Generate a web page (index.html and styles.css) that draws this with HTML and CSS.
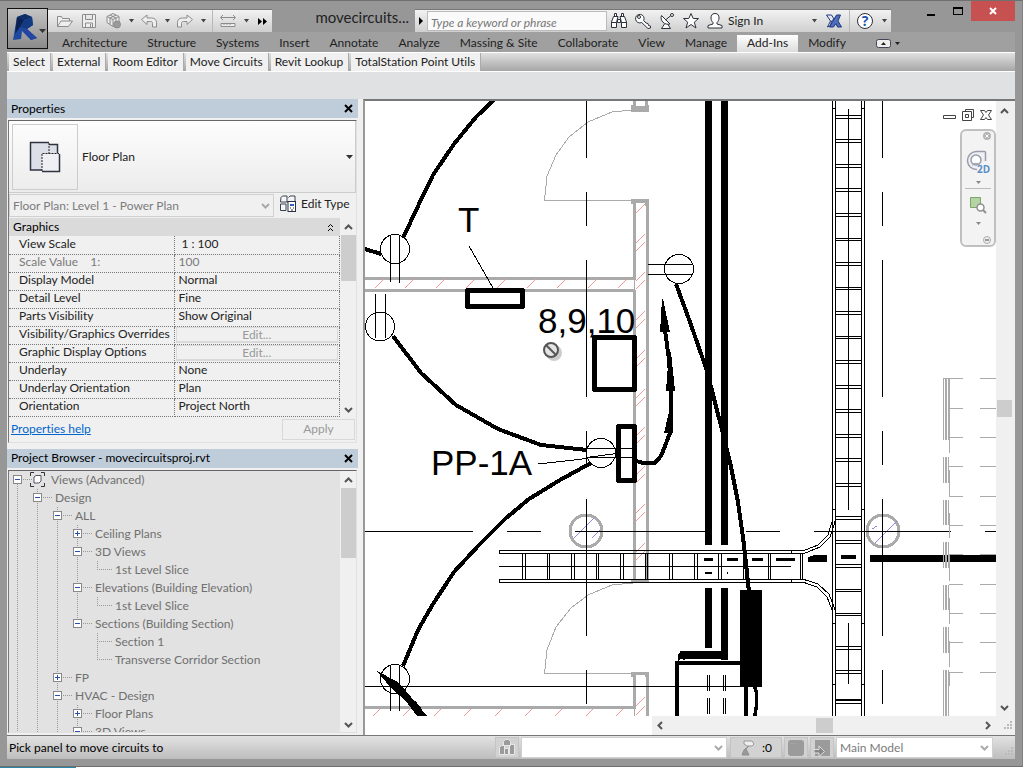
FILE: index.html
```html
<!DOCTYPE html>
<html lang="en">
<head>
    <meta charset="UTF-8">
    <meta name="viewport" content="width=device-width, initial-scale=1.0">
    <title>movecircuitsproj.rvt</title>
    <link rel="stylesheet" href="styles.css">
</head>
<body>
<div class="window">

    <header class="header">
        <button class="app-button" aria-label="Application menu">
            <svg width="38" height="34" viewBox="0 0 38 34">
                <path d="M8 5L16 2L23 5L24 13L18 17L28 26L22 28L13 19L12 27L4 28Z" fill="#1d4aa0"/>
                <path d="M8 5L16 2L23 5L15 8Z" fill="#0e2c66"/>
                <path d="M15 8L23 5L24 13L18 17L11 15Z" fill="#143a82"/>
                <path d="M8 5L15 8L11 15L6 22Z" fill="#0b2250"/>
                <path d="M11 15L18 17L28 26L22 28Z" fill="#2344a0"/>
                <path d="M30 17h7l-3.500 4z" fill="#333"/>
            </svg>
        </button>

        <div class="header-rows">
            <div class="title-row">
                <div class="quick">
                    <button class="tool" aria-label="Open">
                        <svg width="18" height="16" viewBox="0 0 18 16"><path d="M1.500 13.500V3.500h4l1 2h7v2.500M1.500 13.500L5 8h11.500l-4 5.500z"/></svg>
                    </button>
                    <button class="tool" aria-label="Save">
                        <svg width="16" height="16" viewBox="0 0 16 16"><path d="M1.500 1.500h13v13h-13zM4.500 1.500v5h7v-5M4.500 14.500v-4.500h7v4.500M9.500 11v3"/></svg>
                    </button>
                    <button class="tool" aria-label="Synchronize">
                        <svg width="18" height="16" viewBox="0 0 18 16"><path d="M9 .5l6 3v6l-6 4-6-4v-6zM3 3.500l6 3 6-3M9 6.500v7M6 2l6 3v6.500M12 2L6 5v6.500"/><circle cx="13" cy="11.500" r="3.500" fill="#9a9a9a"/></svg>
                    </button>
                    <button class="drop" aria-label="Synchronize options"><svg width="7" height="4" viewBox="0 0 7 4"><path d="M1 0h5L3.500 3.500z"/></svg></button>
                    <button class="tool" aria-label="Undo">
                        <svg width="18" height="14" viewBox="0 0 18 14"><path d="M1.500 5.500l5.500-4.500v3h4.500c3.500 0 5 2 5 4.500v4.500h-4v-3.500c0-1.500-.5-2-2-2H7v3z"/></svg>
                    </button>
                    <button class="drop" aria-label="Undo list"><svg width="7" height="4" viewBox="0 0 7 4"><path d="M1 0h5L3.500 3.500z"/></svg></button>
                    <button class="tool" aria-label="Redo">
                        <svg width="18" height="14" viewBox="0 0 18 14"><path d="M16.500 5.500L11 1v3H6.500c-3.500 0-5 2-5 4.500V13h4V9.500c0-1.500.5-2 2-2H11v3z"/></svg>
                    </button>
                    <button class="drop" aria-label="Redo list"><svg width="7" height="4" viewBox="0 0 7 4"><path d="M1 0h5L3.500 3.500z"/></svg></button>
                    <span class="divider"></span>
                    <button class="tool" aria-label="Measure">
                        <svg width="18" height="14" viewBox="0 0 18 14"><path d="M2 3.500h14M4 1L1.500 3.500 4 6M14 1l2.500 2.500L14 6"/><path d="M2 9.500h14v3H2zM5 9v2M8 9v2M11 9v2" /></svg>
                    </button>
                    <button class="drop" aria-label="Measure options"><svg width="7" height="4" viewBox="0 0 7 4"><path d="M1 0h5L3.500 3.500z"/></svg></button>
                    <button class="more" aria-label="More tools"><svg width="9" height="7" viewBox="0 0 9 7"><path d="M0 0l4 3.500L0 7zM5 0l4 3.500L5 7z"/></svg></button>
                </div>

                <div class="title">movecircuits...</div>

                <div class="search">
                    <button class="search-toggle" aria-label="Collapse search"><svg width="4" height="8" viewBox="0 0 4 8"><path d="M0 0l4 4-4 4z"/></svg></button>
                    <input type="text" placeholder="Type a keyword or phrase" aria-label="Search">
                    <button class="info" aria-label="Find">
                        <svg width="18" height="18" viewBox="0 0 18 18"><path d="M4.500 1.500h2v3h-2zM11.500 1.500h2v3h-2zM3.500 4.500L1.500 10v5.500h5v-5l1.500-6zM14.500 4.500l2 5.500v5.500h-5v-5L10 4.500zM1.500 10.500h5M11.500 10.500h5M7.500 7.500h3v3h-3z"/></svg>
                    </button>
                    <button class="info" aria-label="Subscription">
                        <svg width="18" height="18" viewBox="0 0 18 18"><path d="M9.700 8.500a4.300 4.300 0 1 0-2 2L14 16.500l2.500-.5v-2l-2-.5-.5-2-2-.5z"/><circle cx="5" cy="5" r="1.500"/></svg>
                    </button>
                    <button class="info" aria-label="Communication Center">
                        <svg width="18" height="18" viewBox="0 0 18 18"><path d="M3.500 3.500c-2 5 3 10 8.500 8.500zM7.500 8l6-5M6.500 12l-3 4.500h9L10 12.500"/><circle cx="14" cy="3" r="1.500"/></svg>
                    </button>
                    <button class="info" aria-label="Favorites">
                        <svg width="18" height="18" viewBox="0 0 18 18"><path d="M9 1.500l2.200 5h5.300l-4.200 3.700 1.700 5.800-5-3.500L4 16l1.700-5.800L1.500 6.500h5.300z"/></svg>
                    </button>
                    <button class="sign-in">
                        <svg width="18" height="18" viewBox="0 0 18 18"><path d="M9 1.500c3 0 4 2 4 4.500 0 2-1 3.500-2 4.500v1.500l5 1.500v2.500H2V13.500L7 12v-1.500C6 9.500 5 8 5 6c0-2.500 1-4.500 4-4.500z"/></svg>
                        <span>Sign In</span>
                        <svg class="arrow" width="7" height="4" viewBox="0 0 7 4"><path d="M1 0h5L3.500 3.500z"/></svg>
                    </button>
                    <button class="info" aria-label="Exchange Apps">
                        <svg width="18" height="16" viewBox="0 0 18 16"><path d="M1.500 2h5l2.500 4-2.500 2-1 4.500-3 1.500 3-6z" fill="#e4e8f2" stroke="#20397c"/><path d="M15.500 2h-4l-7 12h4l2.500-3.500 1.500 3.500h4l-3.500-6z" fill="#4c70be" stroke="#20397c"/></svg>
                    </button>
                    <span class="divider"></span>
                    <button class="info" aria-label="Help">
                        <svg class="help" width="18" height="18" viewBox="0 0 18 18"><circle cx="9" cy="9" r="7.500"/><text x="9" y="14" text-anchor="middle">?</text></svg>
                    </button>
                    <button class="drop" aria-label="Help options"><svg width="7" height="4" viewBox="0 0 7 4"><path d="M1 0h5L3.500 3.500z"/></svg></button>
                </div>

                <div class="caption">
                    <button aria-label="Minimize"><svg width="10" height="10" viewBox="0 0 10 10"><path d="M1 8h8v2H1z"/></svg></button>
                    <button aria-label="Maximize"><svg width="10" height="10" viewBox="0 0 10 10"><path d="M0 1h10v8H0zM1 3v5h8V3z" fill-rule="evenodd"/></svg></button>
                    <button class="close" aria-label="Close"><svg width="8" height="8" viewBox="0 0 8 8"><path d="M1 1l6 6M7 1L1 7"/></svg></button>
                </div>
            </div>

            <nav class="tabs">
                <a href="#">Architecture</a>
                <a href="#">Structure</a>
                <a href="#">Systems</a>
                <a href="#">Insert</a>
                <a href="#">Annotate</a>
                <a href="#">Analyze</a>
                <a href="#">Massing &amp; Site</a>
                <a href="#">Collaborate</a>
                <a href="#">View</a>
                <a href="#">Manage</a>
                <a href="#" class="active">Add-Ins</a>
                <a href="#">Modify</a>
                <button class="ribbon-toggle" aria-label="Ribbon display">
                    <svg width="24" height="9" viewBox="0 0 24 9"><rect x=".5" y=".5" width="14" height="8" rx="2" fill="#eee" stroke="#445"/><path d="M5 6h5L7.500 3zM19 3h5l-2.500 3z" fill="#222"/></svg>
                </button>
            </nav>
        </div>
    </header>

    <div class="ribbon">
        <button>Select</button>
        <button>External</button>
        <button>Room Editor</button>
        <button>Move Circuits</button>
        <button>Revit Lookup</button>
        <button>TotalStation Point Utils</button>
    </div>
    <div class="options-bar"></div>

    <main class="main">
        <div class="dock">
            <section class="panel">
                <h2>Properties
                    <button aria-label="Close Properties"><svg width="9" height="9" viewBox="0 0 9 9"><path d="M1 1l7 7M8 1L1 8"/></svg></button>
                </h2>
                <div class="panel-body">
                    <button class="type-selector">
                        <span class="preview">
                            <svg width="32" height="32" viewBox="0 0 32 32">
                                <path d="M1.500 1.500H20v2h9V13h2v18H13v-2H1.500z" fill="#dcdfe8"/>
                                <path d="M13 13h18v18H13z" fill="#eef0f4"/>
                                <path d="M20 1.500H1.500V29H13M20 3.500h8.500V12" fill="none" stroke="#2f3440" stroke-width="1.500"/>
                                <path d="M30.500 13v17.500H13" fill="none" stroke="#2f3440" stroke-width="1.500"/>
                                <path d="M20 2v10.500M13 30V12.500h17" fill="none" stroke="#222" stroke-dasharray="2 1"/>
                            </svg>
                        </span>
                        <span class="type-name">Floor Plan</span>
                        <svg width="7" height="4" viewBox="0 0 7 4"><path d="M0 0h7L3.500 4z" fill="#333"/></svg>
                    </button>

                    <div class="instance">
                        <div class="combo">
                            <select disabled aria-label="Instance"><option>Floor Plan: Level 1 - Power Plan</option></select>
                            <svg width="9" height="6" viewBox="0 0 9 6"><path d="M1 1l3.500 3.500L8 1"/></svg>
                        </div>
                        <button class="edit-type">
                            <svg width="18" height="18" viewBox="0 0 18 18"><path d="M2 2.500L3.500 1H8v6H1.500zM9.500 2.500L11 1h5v5M1.500 9H7v6.500H1.500zM8 7h2" fill="#f6f7fa" stroke="#3c4250"/><rect x="9" y="6.500" width="7.500" height="10" fill="#fff" stroke="#2b3142"/><path d="M11 9h4v2h-4z" fill="#2f62b5"/><path d="M11 13h1M14 13h1M12 15h2" stroke="#333"/></svg>
                            <span>Edit Type</span>
                        </button>
                    </div>

                    <div class="grid-wrap">
                        <table class="props">
                            <thead>
                                <tr><th colspan="2"><span>Graphics<svg width="7" height="9" viewBox="0 0 7 9"><path d="M1 4l2.500-2.500L6 4M1 8l2.500-2.500L6 8"/></svg></span></th></tr>
                            </thead>
                            <tbody>
                                <tr><td>View Scale</td><td class="scale">1 : 100</td></tr>
                                <tr class="off"><td>Scale Value &nbsp;&nbsp; 1:</td><td>100</td></tr>
                                <tr><td>Display Model</td><td>Normal</td></tr>
                                <tr><td>Detail Level</td><td>Fine</td></tr>
                                <tr><td>Parts Visibility</td><td>Show Original</td></tr>
                                <tr><td>Visibility/Graphics Overrides</td><td class="edit"><button disabled>Edit...</button></td></tr>
                                <tr><td>Graphic Display Options</td><td class="edit"><button disabled>Edit...</button></td></tr>
                                <tr><td>Underlay</td><td>None</td></tr>
                                <tr><td>Underlay Orientation</td><td>Plan</td></tr>
                                <tr><td>Orientation</td><td>Project North</td></tr>
                            </tbody>
                        </table>
                        <div class="vscroll">
                            <svg width="9" height="6" viewBox="0 0 9 6"><path d="M1 5l3.500-3.500L8 5"/></svg>
                            <span class="thumb props-thumb"></span>
                            <svg width="9" height="6" viewBox="0 0 9 6"><path d="M1 1l3.500 3.500L8 1"/></svg>
                        </div>
                    </div>

                    <div class="panel-foot">
                        <a href="#">Properties help</a>
                        <button disabled>Apply</button>
                    </div>
                </div>
            </section>

            <section class="panel browser">
                <h2>Project Browser - movecircuitsproj.rvt
                    <button aria-label="Close Project Browser"><svg width="9" height="9" viewBox="0 0 9 9"><path d="M1 1l7 7M8 1L1 8"/></svg></button>
                </h2>
                <div class="panel-body tree-wrap">
                    <ul class="tree">
                        <li>
                            <div class="node"><button class="toggle" aria-label="Collapse"></button>
                                <svg width="15" height="15" viewBox="0 0 15 15"><path d="M4 .5H.5V4M11 .5h3.500V4M4 14.500H.5V11M11 14.500h3.500V11" fill="none" stroke="#333"/><path d="M4 5l2-1.500h5V9l-2 2H4z" fill="#fff" stroke="#556"/></svg>
                                Views (Advanced)</div>
                            <ul>
                                <li>
                                    <div class="node"><button class="toggle" aria-label="Collapse"></button>Design</div>
                                    <ul>
                                        <li>
                                            <div class="node"><button class="toggle" aria-label="Collapse"></button>ALL</div>
                                            <ul>
                                                <li><div class="node"><button class="toggle plus" aria-label="Expand"></button>Ceiling Plans</div></li>
                                                <li>
                                                    <div class="node"><button class="toggle" aria-label="Collapse"></button>3D Views</div>
                                                    <ul><li class="last"><div class="leaf">1st Level Slice</div></li></ul>
                                                </li>
                                                <li>
                                                    <div class="node"><button class="toggle" aria-label="Collapse"></button>Elevations (Building Elevation)</div>
                                                    <ul><li class="last"><div class="leaf">1st Level Slice</div></li></ul>
                                                </li>
                                                <li class="last">
                                                    <div class="node"><button class="toggle" aria-label="Collapse"></button>Sections (Building Section)</div>
                                                    <ul>
                                                        <li><div class="leaf">Section 1</div></li>
                                                        <li class="last"><div class="leaf">Transverse Corridor Section</div></li>
                                                    </ul>
                                                </li>
                                            </ul>
                                        </li>
                                        <li><div class="node"><button class="toggle plus" aria-label="Expand"></button>FP</div></li>
                                        <li>
                                            <div class="node"><button class="toggle" aria-label="Collapse"></button>HVAC - Design</div>
                                            <ul>
                                                <li><div class="node"><button class="toggle plus" aria-label="Expand"></button>Floor Plans</div></li>
                                                <li><div class="node"><button class="toggle" aria-label="Collapse"></button>3D Views</div></li>
                                            </ul>
                                        </li>
                                    </ul>
                                </li>
                            </ul>
                        </li>
                    </ul>
                    <div class="vscroll">
                        <svg width="9" height="6" viewBox="0 0 9 6"><path d="M1 5l3.500-3.500L8 5"/></svg>
                        <span class="thumb tree-thumb"></span>
                        <svg width="9" height="6" viewBox="0 0 9 6"><path d="M1 1l3.500 3.500L8 1"/></svg>
                    </div>
                </div>
            </section>
        </div>

        <section class="view">
            <div class="view-row">
                <div class="canvas">
                    <svg class="drawing" viewBox="365 101 631 615" preserveAspectRatio="xMinYMin slice">
                        <!-- walls and doors -->
                        <g class="wall">
                            <path d="M365 278.500H636M365 290.500H634M634.500 204V279M634.500 290V580M647 204V580M365 707.500H636M634.500 676V708M647 676V716M634.500 101V106M646.500 101V106"/>
                        </g>
                        <path class="jamb" d="M631 105h18v7h-18zM631 199h18v5h-3v2h-12v-2h-3zM631 579h18v4h-18zM631 672h18v5h-18z"/>
                        <path fill="#fff" d="M636 101h9v5h-9zM636 203h9v3h-9zM636 675h9v3h-9z"/>
                        <path class="thin-gray" d="M544.500 200.500L547 176L556 155L569 137L588 122L612 112L633 110M544 200.500H634M544.500 673.500L547 650L556 627L571 608L588 595L612 585L633 583M544 673.500H634M634.500 279V291M634.500 708V716"/>
                        <path class="hatch" d="M375 288l9-9M405 288l9-9M436 288l9-9M466 288l9-9M497 288l9-9M527 288l9-9M557 288l9-9M588 288l9-9M618 288l9-9
                            M373 716l7-7M403 716l7-7M434 716l7-7M464 716l7-7M495 716l7-7M525 716l7-7M555 716l7-7M586 716l7-7M616 716l7-7
                            M636 213l9-9M636 243l9-9M636 251l9-9M636 281l9-9M636 289l9-9M636 320l9-9M636 328l9-9M636 359l9-9M636 367l9-9M636 398l9-9M636 406l9-9M636 436l9-9M636 444l9-9M636 475l9-9M636 483l9-9M636 513l9-9M636 521l9-9M636 552l9-9M636 560l9-9M636 706l9-9M636 715l9-9"/>

                        <!-- columns -->
                        <g class="column"><circle cx="586" cy="531" r="16"/><circle cx="883" cy="531" r="16"/></g>
                        <path class="blue" d="M574 538l20-20M592 538l8-8M875 543l22-22M872 529l5-3"/>

                        <!-- grid lines -->
                        <path class="gridline" d="M586.500 21V716M882.500 21V716M336 531.500H996"/>
                        <path class="thin" d="M365 686.500H740"/>

                        <!-- horizontal tray -->
                        <path class="thin" d="M804 550.500H499.500V553.500H804M804 579.500H499.500V582.500H804M499 566.500H791M791.500 550v3M791.500 579v3
                            M522.500 553v26m3-26v26M547.500 553v26m2-26v26M571.500 553v26m3-26v26M596.500 553v26m2-26v26M620.500 553v26m3-26v26M645.500 553v26m2-26v26M669.500 553v26m3-26v26M694.500 553v26m3-26v26M718.500 553v26m3-26v26M743.500 553v26m2-26v26M768.500 553v26m2-26v26M800.500 553v26m2-26v26"/>
                        <path class="thin" d="M804 550.500L818 545L828 535L832.500 520M804 553.500L820 547L830 537L835.500 520M804 579.500L818 584L829 594L835.500 611M804 582.500L817 587L827 597L832.500 611"/>
                        <path d="M704 558h9v3h-9zM727 558h11v3h-11zM752 558h11v3h-11zM776 558h19v3h-19zM808 557l6-2h13v7h-19zM841 555h15v4h-15zM705 572h7v2h-7zM727 572h1v2h-1zM870 555h126v7H870z"/>

                        <!-- vertical tray -->
                        <path class="thin" d="M832.500 101V716M835.500 101V716M861.500 101V716M864.500 101V716M848.500 109V510M848.500 623V684M832 108.500h4M861 108.500h4M832 509.500h4M861 509.500h4M832 623.500h4M861 623.500h4M832 684.500h4M861 684.500h4
                            M836 115.500h26m-26 3h26M836 139.500h26m-26 3h26M836 164.500h26m-26 3h26M836 188.500h26m-26 3h26M836 213.500h26m-26 3h26M836 238.500h26m-26 2h26M836 262.500h26m-26 3h26M836 287.500h26m-26 2h26M836 311.500h26m-26 3h26M836 336.500h26m-26 2h26M836 360.500h26m-26 3h26M836 385.500h26m-26 3h26M836 409.500h26m-26 3h26M836 434.500h26m-26 3h26M836 458.500h26m-26 3h26M836 483.500h26m-26 3h26M836 516.500h26m-26 3h26
                            M836 540.500h26m-26 3h26M836 564.500h26m-26 3h26M836 589.500h26m-26 2h26M836 613.500h26m-26 2h26M836 646.500h26m-26 3h26M836 670.500h26m-26 3h26M836 699.500h26m-26 1h26m-26 3h26"/>

                        <!-- casework at right -->
                        <path class="thin-gray" d="M943.500 378V440M948.500 378V440M943.500 457V483M948.500 457V483M943.500 500V525M948.500 500V525M943.500 542V568M948.500 542V568M943.500 585V610M948.500 585V610M943.500 627V653M948.500 627V653M943.500 670V716M948.500 670V716M949.500 378V453M949.500 470V497M949.500 513V538M949.500 555V581M949.500 598V624M949.500 641V667M949.500 672V686
                            M944 378.500h19m17 0h16M949 408.500h14m17 0h16M949 437.500h14m17 0h16M949 466.500h14m17 0h16M949 496.500h14m17 0h16M949 525.500h14m17 0h16M949 554.500h14m17 0h16M949 584.500h14m17 0h16M949 613.500h14m17 0h16M949 642.500h14m17 0h16M949 672.500h14m17 0h16"/>
                        <path class="thin-gray wide" d="M946 379V440M946 457V483M946 500V525M946 542V568M946 585V610M946 627V653M946 670V716"/>

                        <!-- feeders -->
                        <path d="M705 101h7v444h-7zM721 101h7v444h-7zM705 588h7v60h-7zM721 588h7v72h-7zM680 651h46v8h-46zM675 661h66v4h-66zM675 661h4v55h-4zM740 590h22v97h-22zM744 687h4v29h-4zM753 687h4l1 6v12l-1 11h-4l2-12v-10z"/>
                        <path d="M678 654l3-3h4v9l-4-1-3 2z"/>
                        <path class="thin" d="M707.500 675v16m0 7v16M709.500 675v16m0 7v16M723.500 675v16m0 7v16M725.500 675v16m0 7v16"/>

                        <!-- equipment -->
                        <g class="box">
                            <rect x="467.500" y="290.500" width="55" height="16"/>
                            <rect x="594.500" y="337.500" width="40" height="52"/>
                            <rect x="618.500" y="426.500" width="16" height="54"/>
                        </g>
                        <g class="outlet">
                            <circle cx="395" cy="249" r="14.500"/>
                            <circle cx="380" cy="326.500" r="14.500"/>
                            <circle cx="601" cy="453" r="14.500"/>
                            <circle cx="679" cy="269" r="14.500"/>
                            <circle cx="395" cy="679" r="14.500"/>
                        </g>
                        <path class="thin" d="M390.500 235V282M399.500 235V283M375.500 294V338M385.500 294V338M587 448.500H633M587 457.500H633M648 264.500H692M648 274.500H692M390.500 665V711M399.500 665V711M469 246L493 288M538 464L587 458.500M590 457L617 453.500"/>

                        <!-- wires -->
                        <g class="wire">
                            <path d="M495 99L476 117L454 144L433 175L419 204L403 238M365 249L381 254"/>
                            <path d="M393 336L421 373L456 405L498 429L541 445L587 450"/>
                            <path d="M591 463L560 480L529 499L505 519L479 545L454 572L433 604L418 630L403 666"/>
                            <path d="M636 461L645 463.500L655 463L661 456L665 446L670 433L671 420L671 390L669 360L665 330"/>
                            <path d="M676 284L690 322L707 371L722 430L730 462L738 502L744 545L749 592"/>
                        </g>
                        <path d="M662 299l1 0L670 332H660zM669 352l2 0L675 391H666zM669 412h3l1 21h-9zM377 671l21 11 8 9 21 25h-10l-12-16-6-5-9-8zM414 699l7 9-2 4z"/>

                        <g class="label">
                            <text x="458" y="232">T</text>
                            <text x="538" y="333">8,9,10</text>
                            <text x="431" y="475">PP-1A</text>
                        </g>

                        <!-- cursor -->
                        <g class="cursor">
                            <circle cx="554" cy="353" r="8" fill="#000" opacity=".2"/>
                            <circle cx="551" cy="350" r="7" fill="#e4e4e4" stroke="#555" stroke-width="2"/>
                            <path d="M546 345l10 10" stroke="#555" stroke-width="2"/>
                        </g>
                    </svg>

                    <div class="view-tools">
                        <button aria-label="Minimize view"><svg width="13" height="12" viewBox="0 0 13 12"><path d="M.5 6.500h12v3H.5z"/></svg></button>
                        <button aria-label="Restore view"><svg width="12" height="12" viewBox="0 0 12 12"><path d="M3.500 2.500v-2h8v8h-2M.5 2.500h9v9h-9zM3.500 5.500h3v3h-3z"/></svg></button>
                        <button aria-label="Close view"><svg width="12" height="12" viewBox="0 0 12 12"><path d="M.5 1.500h4L6 3.500l1.500-2h4L8.500 6l3 4.500h-4L6 8.500l-1.500 2h-4L3.500 6z"/></svg></button>
                    </div>

                    <div class="navbar">
                        <button class="nav-end" aria-label="Close navigation bar"><svg width="8" height="8" viewBox="0 0 8 8"><circle cx="4" cy="4" r="4" fill="#b5b5b5"/><path d="M2.500 2.500l3 3M5.500 2.500l-3 3" stroke="#fff"/></svg></button>
                        <button class="nav-wheel" aria-label="Steering wheel">
                            <svg width="26" height="25" viewBox="0 0 26 25"><path d="M20.500 11V2.500a1 1 0 0 0-1-1H11A9 9 0 1 0 12 19.500" fill="#eef0f5" stroke="#9a9da8" stroke-width="1.500"/><circle cx="11" cy="10" r="5" fill="#fff" stroke="#9a9da8" stroke-width="1.500"/><path d="M7.500 15.500c1-3 6-3 7 0" fill="none" stroke="#9a9da8"/><text x="12" y="23">2D</text></svg>
                        </button>
                        <button class="nav-drop" aria-label="Wheel options"><svg width="5" height="3" viewBox="0 0 5 3"><path d="M0 0h5L2.500 3z" fill="#888"/></svg></button>
                        <span class="nav-line"></span>
                        <button class="nav-zoom" aria-label="Zoom">
                            <svg width="18" height="17" viewBox="0 0 18 17"><path d="M1.500.5h10v10h-10z" fill="#b5d3a5" stroke="#7aa868"/><circle cx="11.500" cy="10.500" r="3.500" fill="#fff" stroke="#909090" stroke-width="1.500"/><path d="M14 13l3 3" stroke="#909090" stroke-width="2"/></svg>
                        </button>
                        <button class="nav-drop" aria-label="Zoom options"><svg width="5" height="3" viewBox="0 0 5 3"><path d="M0 0h5L2.500 3z" fill="#888"/></svg></button>
                        <button class="nav-end" aria-label="Navigation bar options"><svg width="8" height="8" viewBox="0 0 8 8"><circle cx="4" cy="4" r="3.500" fill="#eee" stroke="#aaa"/><path d="M2 4h4" stroke="#999" stroke-width="2"/></svg></button>
                    </div>
                </div>
                <div class="vscroll view-vscroll">
                    <svg width="9" height="6" viewBox="0 0 9 6"><path d="M1 5l3.500-3.500L8 5"/></svg>
                    <span class="thumb view-thumb"></span>
                    <svg width="9" height="6" viewBox="0 0 9 6"><path d="M1 1l3.500 3.500L8 1"/></svg>
                </div>
            </div>
            <div class="view-bottom">
                <div class="hscroll">
                    <svg width="6" height="9" viewBox="0 0 6 9"><path d="M5 1L1.500 4.500L5 8"/></svg>
                    <span class="hthumb"></span>
                    <svg width="6" height="9" viewBox="0 0 6 9"><path d="M1 1l3.500 3.500L1 8"/></svg>
                </div>
                <svg class="grip" width="9" height="9" viewBox="0 0 9 9"><path d="M6 0h2v2H6zM3 3h2v2H3zM6 3h2v2H6zM0 6h2v2H0zM3 6h2v2H3zM6 6h2v2H6z"/></svg>
            </div>
        </section>
    </main>

    <footer class="status">
        <span class="message">Pick panel to move circuits to</span>
        <button class="cell" aria-label="Worksets">
            <svg width="18" height="17" viewBox="0 0 18 17"><path d="M1.500 8.500l2-2h3v9h-5zM11.500 6.500l2-1h3v10h-5zM5.500 2.500l2-2h3l2 2v4h-7zM6.500 9.500h4v6h-4z" fill="#9b9b9b" stroke="#e8e8e8"/></svg>
        </button>
        <div class="combo workset">
            <select disabled aria-label="Active workset"><option></option></select>
            <svg width="9" height="6" viewBox="0 0 9 6"><path d="M1 1l3.500 3.500L8 1"/></svg>
        </div>
        <button class="cell requests">
            <svg width="16" height="17" viewBox="0 0 16 17"><path d="M4 2h8l2 3-2 2H7L4 5z" fill="#eee" stroke="#999"/><path d="M9 7L4 11l-2 5h7L6 10z" stroke="#8d8d8d" fill="#999"/></svg>
            <span>:0</span>
        </button>
        <button class="cell" aria-label="Design options">
            <svg width="16" height="16" viewBox="0 0 16 16"><rect width="16" height="16" rx="3" fill="#9b9b9b"/><path d="M3 3.500h6" stroke="#aaa" stroke-dasharray="1 1"/></svg>
        </button>
        <button class="cell" aria-label="Active only">
            <svg width="16" height="16" viewBox="0 0 16 16"><path d="M1 0h15v16H1z" fill="#9b9b9b"/><path d="M0 9.500h5V6l5.500 5.500L5 16.500v-3.500H0z" fill="#888" stroke="#ddd"/></svg>
        </button>
        <div class="combo model">
            <select disabled aria-label="Design option"><option>Main Model</option></select>
            <svg width="9" height="6" viewBox="0 0 9 6"><path d="M1 1l3.500 3.500L8 1"/></svg>
        </div>
        <svg class="grip" width="9" height="9" viewBox="0 0 9 9"><path d="M6 0h2v2H6zM3 3h2v2H3zM6 3h2v2H6zM0 6h2v2H0zM3 6h2v2H3zM6 6h2v2H6z"/></svg>
    </footer>
</div>
</body>
</html>
```
FILE: styles.css
```css
* {
    box-sizing: border-box;
}

body {
    margin: 0;
    height: 100vh;
    padding: 0 1px 1px 0;
    background: linear-gradient(to right, #2a87a8 76px, #fff 76px);
    font-family: Lato, "Open Sans", sans-serif;
    font-size: 12px;
    font-variant-ligatures: none;
    line-height: 16px;
    color: #222;
    overflow: hidden;
}

button,
select,
input {
    font: inherit;
    color: inherit;
}

button {
    display: flex;
    align-items: center;
    justify-content: center;
    padding: 0;
    border: none;
    background: none;
}

svg {
    display: block;
    flex: none;
}

.window {
    display: flex;
    flex-direction: column;
    height: 100%;
    padding: 0 7px 7px;
    border-top: 1px solid #707070;
    border-bottom: 1px solid #6e6e6e;
    border-right: 1px solid #808080;
    background: #979797;
}

/* title bar */

.header {
    display: flex;
    flex: none;
}

.app-button {
    width: 41px;
    height: 41px;
    margin: 7px 0 3px;
    border: 1px solid #111;
    background: linear-gradient(#c4c4c4, #8a8a8a);
}

.header-rows {
    flex: 1;
    min-width: 0;
}

.title-row {
    display: flex;
    height: 31px;
}

.quick,
.search {
    display: flex;
    align-items: center;
    align-self: flex-end;
    height: 23px;
    background: linear-gradient(#f2f2f2, #cfcfcf);
    border-top: 1px solid #777;
}

.quick {
    padding-left: 5px;
}

.tool,
.info {
    width: 24px;
    height: 22px;
}

.tool svg {
    fill: #eee;
    stroke: #8c8c8c;
}

.info svg,
.sign-in svg {
    fill: #fff;
    stroke: #2b303a;
}

.drop {
    width: 12px;
    height: 22px;
}

.drop svg,
.sign-in .arrow {
    fill: #444;
    stroke: none;
}

.more {
    width: 20px;
    height: 22px;
}

.divider {
    width: 1px;
    height: 22px;
    margin: 0 3px;
    background: #b8b8b8;
}

.title {
    flex: 1;
    padding: 6px 6px 0 0;
    text-align: right;
    font-size: 15px;
    line-height: 20px;
    white-space: nowrap;
}

.search-toggle {
    width: 12px;
    height: 22px;
}

.search input {
    width: 180px;
    height: 20px;
    padding: 2px 3px 0;
    border: 1px solid #bbb;
    background: #fafafa;
}

.search input::placeholder {
    color: #777;
    font-style: italic;
}

.sign-in {
    width: 119px;
    height: 22px;
    gap: 4px;
    padding: 0 4px 0 3px;
}

.sign-in .arrow {
    margin-left: auto;
}

.search .help text {
    font-family: "Open Sans", sans-serif;
    font-size: 14px;
    font-weight: bold;
    fill: #1f55b0;
    stroke: none;
}

.search .drop {
    width: 14px;
}

.caption {
    display: flex;
    align-items: flex-start;
    margin-left: 26px;
}

.caption button {
    width: 27px;
    height: 20px;
}

.caption .close {
    width: 44px;
    background: #c75050;
}

.close svg {
    stroke: #fff;
    stroke-width: 2;
}

/* ribbon */

.tabs {
    display: flex;
    height: 20px;
    padding: 3px 0 0 4px;
    background: #a0a0a0;
}

.tabs a {
    padding: 0 10px;
    color: #222;
    text-decoration: none;
    white-space: nowrap;
}

.tabs .active {
    background: linear-gradient(#fff, #dcdcdc);
}

.ribbon-toggle {
    margin-left: 20px;
}

.ribbon {
    display: flex;
    flex: none;
    height: 20px;
    padding-left: 2px;
    gap: 2px;
    border-top: 1px solid #fff;
    border-bottom: 1px solid #fff;
    background: linear-gradient(#e0e0e0, #a6a6a6);
}

.ribbon button {
    padding: 0 5px 0 4px;
    background: #f0f0f0;
    border-right: 1px solid #aaa;
    white-space: nowrap;
}

.options-bar {
    flex: none;
    height: 27px;
    background: #e0e1e3;
}

/* docked panels */

.main {
    display: flex;
    flex: 1;
    min-height: 0;
    gap: 5px;
    background: #f0f0f0;
}

.dock {
    display: flex;
    flex-direction: column;
    width: 351px;
    gap: 6px;
    padding-bottom: 2px;
}

.panel {
    display: flex;
    flex-direction: column;
}

.browser {
    flex: 1;
    min-height: 0;
}

.panel h2 {
    display: flex;
    flex: none;
    align-items: center;
    justify-content: space-between;
    height: 19px;
    margin: 0 0 2px;
    padding: 0 5px 0 4px;
    background: #bfcddb;
    font-size: 12px;
    font-weight: normal;
    color: #000;
}

.panel h2 svg {
    stroke: #000;
    stroke-width: 2;
}

.panel-body {
    margin: 0 1px;
    border-top: 1px solid #666;
    border-left: 1px solid #777;
    border-right: 1px solid #e0e0e0;
    border-bottom: 1px solid #e0e0e0;
}

.type-selector {
    justify-content: flex-start;
    width: 100%;
    height: 72px;
    padding: 2px 2px 2px 3px;
    background: linear-gradient(#fdfdfd, #ececec);
    border-bottom: 1px solid #ccc;
    border-right: 1px solid #ccc;
}

.preview {
    display: grid;
    place-items: center;
    width: 66px;
    height: 66px;
    border: 1px solid #ccc;
}

.type-name {
    flex: 1;
    padding-left: 4px;
    text-align: left;
}

.instance {
    display: flex;
    padding: 1px 0;
}

.combo {
    display: grid;
    align-items: center;
    width: 265px;
    height: 23px;
}

.combo select,
.combo svg {
    grid-area: 1 / 1;
}

.combo select {
    appearance: none;
    width: 100%;
    height: 100%;
    padding: 0 3px;
    border: 1px solid #d0d0d0;
    border-radius: 0;
    background: #f0f0f0;
    color: #7c7c7c;
    opacity: 1;
}

.combo svg {
    justify-self: end;
    margin-right: 4px;
    fill: none;
    stroke: #aaa;
    stroke-width: 2;
}

.edit-type {
    gap: 4px;
    padding-left: 5px;
    height: 20px;
}

.grid-wrap {
    display: flex;
}

.props {
    flex: 1;
    table-layout: fixed;
    border-collapse: collapse;
}

.props th {
    height: 18px;
    padding: 0 6px 0 4px;
    background: #dadada;
    font-weight: normal;
    text-align: left;
    color: #000;
}

.props th span {
    display: flex;
    align-items: center;
    justify-content: space-between;
}

.props th svg {
    fill: none;
    stroke: #000;
}

.props td {
    height: 18px;
    padding: 0 0 2px 4px;
    line-height: 14px;
    border-bottom: 1px dotted #777;
    border-right: 1px dotted #777;
}

.props td:first-child {
    width: 165px;
    padding-left: 10px;
    white-space: nowrap;
}

.props .scale {
    padding-left: 7px;
}

.off td {
    color: #7a7a7a;
}

.props .edit {
    padding: 0 1px;
}

.edit button {
    width: 100%;
    height: 16px;
    border: 1px solid #dadada;
    border-bottom-width: 2px;
    color: #999;
}

.vscroll {
    display: flex;
    flex: none;
    flex-direction: column;
    align-items: center;
    justify-content: space-between;
    width: 16px;
    padding: 6px 0 4px;
    background: #f0f0f0;
}

.vscroll svg,
.hscroll svg {
    fill: none;
    stroke: #555;
    stroke-width: 2;
}

.thumb {
    width: 15px;
    margin-bottom: auto;
    background: #cdcdcd;
}

.props-thumb {
    height: 46px;
    margin-top: 5px;
}

.tree-thumb {
    height: 70px;
    margin-top: 5px;
}

.panel-foot {
    display: flex;
    align-items: center;
    justify-content: space-between;
    height: 25px;
    padding: 0 1px 0 2px;
}

.panel-foot a {
    color: #0066cc;
}

.panel-foot button {
    width: 73px;
    height: 21px;
    border: 1px solid #d8d8d8;
    color: #999;
}

/* project browser tree */

.tree-wrap {
    display: flex;
    flex: 1;
    min-height: 0;
    overflow: hidden;
    background: #e2e2e2;
}

.tree {
    flex: 1;
    color: #707070;
}

.tree,
.tree ul {
    margin: 0;
    padding: 0;
    list-style: none;
}

.tree ul {
    padding-left: 20px;
}

.tree li {
    background: repeating-linear-gradient(#999 0 1px, transparent 1px 2px) 8px 0 / 1px 100% no-repeat;
}

.tree > li {
    background-position: 8px 9px;
}

.tree .last {
    background-size: 1px 9px;
}

.node,
.leaf {
    display: flex;
    align-items: center;
    height: 18px;
    white-space: nowrap;
}

.node {
    padding-left: 4px;
}

.node::before,
.leaf::before {
    content: "";
    width: 9px;
    height: 1px;
    margin: 0 3px 0 1px;
    background: repeating-linear-gradient(to right, #999 0 1px, transparent 1px 2px);
}

.toggle {
    order: -1;
    width: 9px;
    height: 9px;
    border: 1px solid #888;
    background: linear-gradient(#2a4fa8, #2a4fa8) center / 5px 1px no-repeat #fff;
}

.toggle.plus {
    background: linear-gradient(#2a4fa8, #2a4fa8) center / 5px 1px no-repeat,
        linear-gradient(#2a4fa8, #2a4fa8) center / 1px 5px no-repeat #fff;
}

.node svg {
    margin: 0 6px 0 -5px;
}

.leaf {
    padding-left: 8px;
}

.leaf::before {
    width: 15px;
    margin-left: 0;
}

/* drawing view */

.view {
    display: flex;
    flex: 1;
    flex-direction: column;
    min-width: 0;
    border-top: 2px solid #777;
    border-left: 2px solid #999;
    background: #fff;
}

.view-row {
    display: flex;
    flex: 1;
    min-height: 0;
}

.canvas {
    position: relative;
    flex: 1;
    min-width: 0;
}

.drawing {
    width: 100%;
    height: 100%;
    shape-rendering: crispEdges;
}

.wall {
    fill: none;
    stroke: #aaa;
    stroke-width: 3;
}

.jamb {
    fill: #aaa;
}

.thin,
.gridline {
    fill: none;
    stroke: #000;
}

.gridline {
    stroke-dasharray: 137 34 34 34;
}

.thin-gray {
    fill: none;
    stroke: #aaa;
}

.wide {
    stroke-width: 2;
}

.hatch {
    fill: none;
    stroke: #f59a9a;
}

.column {
    fill: none;
    stroke: #aaa;
    stroke-width: 3;
}

.blue {
    stroke: #8a8ae6;
}

.box {
    fill: none;
    stroke: #000;
    stroke-width: 5;
    stroke-linejoin: round;
}

.outlet {
    fill: none;
    stroke: #000;
}

.wire {
    fill: none;
    stroke: #000;
    stroke-width: 4;
}

.label {
    font-family: "Liberation Sans", Arial, sans-serif;
    font-size: 35px;
}

.cursor {
    shape-rendering: auto;
}

.view-tools {
    position: absolute;
    top: 8px;
    right: 4px;
    display: flex;
    gap: 6px;
}

.view-tools svg {
    fill: #fff;
    stroke: #444;
}

.navbar {
    position: absolute;
    top: 28px;
    right: 0;
    display: flex;
    flex-direction: column;
    align-items: center;
    width: 36px;
    height: 118px;
    padding: 1px 3px;
    border: 2px solid #c0c0c0;
    border-radius: 6px;
    background: #f3f3f3;
}

.nav-end {
    align-self: flex-end;
    height: 8px;
}

.nav-wheel {
    margin: 10px 0 6px;
}

.nav-wheel text {
    font-family: "Open Sans", sans-serif;
    font-size: 10px;
    font-weight: bold;
    fill: #5b8fc7;
}

.nav-line {
    width: 26px;
    height: 1px;
    margin: 4px 0 8px;
    background: #bbb;
}

.nav-zoom {
    margin-bottom: 8px;
}

.nav-drop + .nav-end {
    margin-top: auto;
}

.view-vscroll {
    width: 19px;
    padding: 7px 3px 5px 1px;
}

.view-thumb {
    height: 17px;
    margin-top: 286px;
}

.view-bottom {
    display: flex;
    align-items: center;
    justify-content: flex-end;
    height: 19px;
    background: linear-gradient(to right, #fff 287px, #f0f0f0 287px);
}

.hscroll {
    display: flex;
    align-items: center;
    justify-content: space-between;
    width: 343px;
    height: 17px;
    padding: 0 4px 0 5px;
}

.hthumb {
    width: 17px;
    height: 15px;
    background: #cdcdcd;
}

.grip {
    fill: #bbb;
}

.view-bottom .grip {
    margin: 0 2px 0 9px;
}

/* status bar */

.status {
    display: flex;
    flex: none;
    align-items: center;
    height: 24px;
    border-top: 1px solid #777;
    background: linear-gradient(#e2e2e2, #bdbdbd);
    color: #000;
}

.message {
    flex: 1;
    padding-left: 2px;
}

.cell {
    width: 24px;
    height: 21px;
    margin-right: 2px;
    background: #d2d2d2;
    border: 1px solid #c4c4c4;
}

.requests {
    width: 52px;
    gap: 6px;
}

.status .combo {
    height: 21px;
    margin-right: 3px;
}

.status .combo select {
    background: #fff;
}

.status .workset {
    width: 206px;
}

.status .model {
    width: 157px;
}

.status .grip {
    margin: 8px 1px 0 9px;
}
```
